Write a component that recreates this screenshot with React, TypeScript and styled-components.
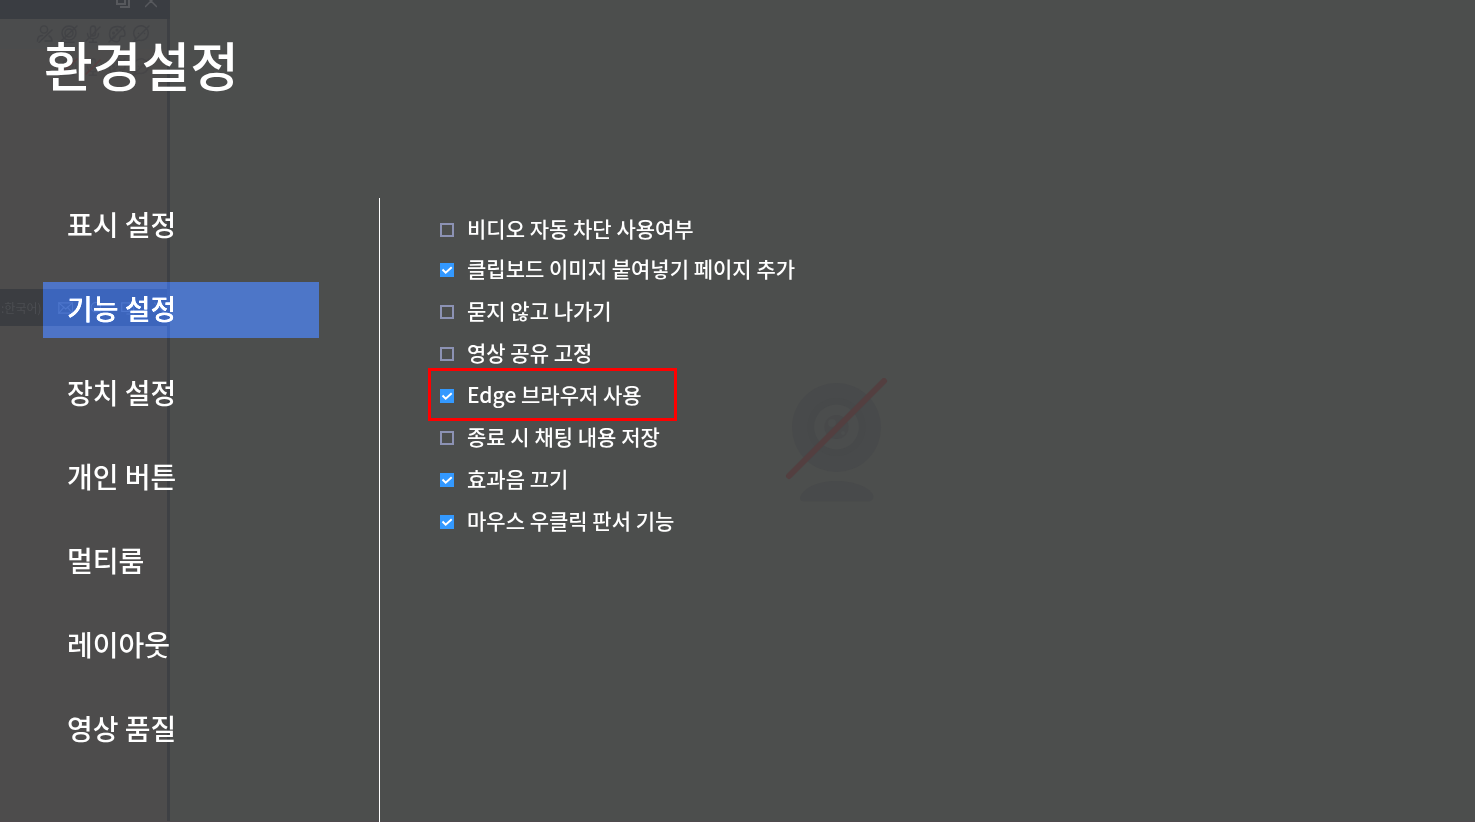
import React from "react";
import styled, { createGlobalStyle } from "styled-components";

const GlobalStyle = createGlobalStyle`
  * { box-sizing: border-box; }
  body {
    margin: 0;
    background: #4c4e4d;
    color: #fff;
    font-family: "Noto Sans CJK KR", "Noto Sans", sans-serif;
  }
`;

const Screen = styled.div`
  position: relative;
  min-height: 100vh;
  display: flex;
  flex-direction: column;
  overflow: hidden;
`;

/* The meeting window that shows dimly through the settings overlay */
const Behind = styled.div`
  position: absolute;
  inset: 0;
  display: flex;
  border-bottom: 1px solid #504a4d;
`;

const SidePanel = styled.div`
  width: 170px;
  display: flex;
  flex-direction: column;
  background: #4d4c4c;
  border-right: 3px solid #3e4044;
`;

const TitleBar = styled.div`
  height: 19px;
  margin-right: -3px;
  padding-right: 13px;
  display: flex;
  justify-content: flex-end;
  gap: 15px;
  background: #3a3d42;
  color: #57595d;
`;

const DeviceRow = styled.div<{ $first?: boolean }>`
  height: ${(p) => (p.$first ? 30 : 36)}px;
  padding-left: ${(p) => (p.$first ? 36 : 60)}px;
  display: flex;
  align-items: center;
  gap: 6px;
  background: ${(p) => (p.$first ? "#4b4c4d" : "transparent")};
  color: ${(p) => (p.$first ? "#424346" : "#474648")};
`;

const ChatBar = styled.div`
  height: 37px;
  margin-top: 204px;
  padding-left: 1px;
  display: flex;
  align-items: center;
  gap: 16px;
  background: #3b3d41;
  color: #4c4e52;
  font-size: 12px;
  white-space: nowrap;
`;

const Stage = styled.div`
  flex: 1;
  display: flex;
  justify-content: center;
  align-items: center;
`;

const CameraArt = styled.svg`
  display: block;
  margin: 60px 0 0 28px;
`;

const Header = styled.header`
  position: relative;
  padding: 26px 44px 0;
`;

const Title = styled.h1`
  margin: 0;
  font-size: 53px;
  line-height: 76px;
  font-weight: 500;
`;

const Body = styled.main`
  position: relative;
  flex: 1;
  display: flex;
  margin-top: 96px;
`;

const Menu = styled.nav`
  width: 380px;
  padding-left: 43px;
  display: flex;
  flex-direction: column;
  align-items: flex-start;
  gap: 28px;
  border-right: 1px solid #fff;
`;

/* The active bar only adds its blue, so the window behind stays visible */
const MenuItem = styled.button<{ $active?: boolean }>`
  width: 276px;
  height: 56px;
  padding: 0 24px 4px;
  border: 0;
  background: ${(p) => (p.$active ? "rgb(1, 40, 123)" : "transparent")};
  mix-blend-mode: ${(p) => (p.$active ? "plus-lighter" : "normal")};
  color: #fff;
  font-family: inherit;
  font-size: 28px;
  font-weight: 500;
  text-align: left;
  cursor: pointer;
`;

const Options = styled.form`
  padding: 12px 0 0 48px;
  display: flex;
  flex-direction: column;
  align-items: flex-start;
`;

const Option = styled.label<{ $short?: boolean }>`
  position: relative;
  height: ${(p) => (p.$short ? 38 : 42)}px;
  padding: 0 0 2px 12px;
  display: flex;
  align-items: center;
  gap: 13px;
  font-size: 21px;
  line-height: 32px;
  font-weight: 500;
  white-space: nowrap;
`;

const Highlight = styled.span`
  position: absolute;
  inset: -6px -35px -5px 0;
  border: 3px solid #f00;
  pointer-events: none;
`;

const Tick = styled.input`
  appearance: none;
  width: 14px;
  height: 14px;
  margin: 4px 0 0;
  border: 2px solid #8c92b4;
  &:checked {
    border: 0;
    background: #3399ff
      url("data:image/svg+xml,%3Csvg xmlns='http://www.w3.org/2000/svg' viewBox='0 0 14 14'%3E%3Cpath d='M2.5 6.5l3.2 3.2 6-5.4' fill='none' stroke='white' stroke-width='2'/%3E%3C/svg%3E");
  }
`;

const Svg = ({ children }: { children: React.ReactNode }) => (
  <svg width="18" height="18" viewBox="0 0 18 18" fill="none" stroke="currentColor" strokeWidth="1.4" strokeLinecap="round">
    {children}
  </svg>
);

const PersonOff = () => (
  <Svg>
    <circle cx="8" cy="4.5" r="3.6" />
    <path d="M9 16H16c0-3-1-4-3-5M1.5 16c0-4 2-5.5 5-5.5M16 5L3 17.5" />
  </Svg>
);
const CameraOff = ({ slash }: { slash?: string }) => (
  <Svg>
    <circle cx="9" cy="8" r="7" />
    <circle cx="9" cy="8" r="4" />
    <path d="M4 17.3h10" />
    <path d="M17 1L1 16" stroke={slash} />
  </Svg>
);
const MicOff = ({ slash }: { slash?: string }) => (
  <Svg>
    <rect x="6.5" y="1" width="5" height="10" rx="2.5" />
    <path d="M3.5 8.5c0 7 11 7 11 0M9 14v3M5.5 17.3h7" />
    <path d="M16 2L2 16" stroke={slash} />
  </Svg>
);
const PaletteOff = () => (
  <Svg>
    <path d="M10 16.5c-4 1-8.500-2-8.500-7.500S5 1.500 9.500 1.500 17 5 17 9s-4.500 1-5 3 .5 4-2 4.500zM17 1L1 17" />
    <circle cx="5.5" cy="8" r=".8" />
    <circle cx="9" cy="5" r=".8" />
    <circle cx="6" cy="12" r=".8" />
  </Svg>
);
const ChatOff = () => (
  <Svg>
    <path d="M2.5 16.5l1-3.5a7.300 7.300 0 1 1 3.500 2.200zM6.500 8.500h.1M9.500 8.500h.1M12.500 8.500h.1M17 1L1 17" />
  </Svg>
);
const Mail = () => (
  <Svg>
    <rect x="1" y="3" width="16" height="12" />
    <path d="M1 3l8 7 8-7M1 15l6-7M17 15l-6-7" />
  </Svg>
);
const Search = () => (
  <Svg>
    <circle cx="8" cy="8" r="5.5" />
    <path d="M12 12l3 3" />
  </Svg>
);
const Windows = () => (
  <Svg>
    <path d="M2 3h9v10H2zM14 7h2v9H8" />
  </Svg>
);
const Close = () => (
  <Svg>
    <path d="M3 3l11 11M14 3L3 14" />
  </Svg>
);

const menu = ["표시 설정", "기능 설정", "장치 설정", "개인 버튼", "멀티룸", "레이아웃", "영상 품질"];

const options = [
  { text: "비디오 자동 차단 사용여부", on: false },
  { text: "클립보드 이미지 붙여넣기 페이지 추가", on: true },
  { text: "묻지 않고 나가기", on: false },
  { text: "영상 공유 고정", on: false },
  { text: "Edge 브라우저 사용", on: true, marked: true },
  { text: "종료 시 채팅 내용 저장", on: false },
  { text: "효과음 끄기", on: true },
  { text: "마우스 우클릭 판서 기능", on: true },
];

export default function App() {
  const [active, setActive] = React.useState(1);
  return (
    <Screen>
      <GlobalStyle />
      <Behind aria-hidden="true">
        <SidePanel>
          <TitleBar>
            <svg width="14" height="9" viewBox="0 0 14 9" fill="none" stroke="currentColor" strokeWidth="2">
              <path d="M1 0v4h8V0M4 7h9V0" />
            </svg>
            <svg width="12" height="8" viewBox="0 0 12 8" fill="none" stroke="currentColor" strokeWidth="1.5">
              <path d="M0 7L6 1l6 6M3-2l3 3 3-3" />
            </svg>
          </TitleBar>
          <DeviceRow $first>
            <PersonOff />
            <CameraOff />
            <MicOff />
            <PaletteOff />
            <ChatOff />
          </DeviceRow>
          <DeviceRow>
            <CameraOff slash="#573f40" />
            <MicOff slash="#573f40" />
            <PaletteOff />
            <ChatOff />
          </DeviceRow>
          <ChatBar>
            :한국어)
            <Mail />
            <Search />
            <Windows />
            <Close />
          </ChatBar>
        </SidePanel>
        <Stage>
          <CameraArt width="104" height="126" viewBox="0 0 104 126">
            <circle cx="51.5" cy="49.5" r="44.5" fill="#484a4b" />
            <circle cx="51.5" cy="49" r="29" fill="#47494a" />
            <circle cx="51.5" cy="49" r="22.5" fill="#4b4d4d" />
            <circle cx="51.5" cy="49" r="12" fill="#48494a" />
            <circle cx="47" cy="45" r="4" fill="#4b4d4d" />
            <circle cx="58" cy="55" r="2" fill="#4b4d4d" />
            <path d="M15 120C17 110 33 103 51.5 103S86 110 88.5 118q0 5-5 5.500H20q-5 0-5-3.500z" fill="#484a4b" />
            <path d="M4 98L99 3" stroke="#533f40" strokeWidth="6" strokeLinecap="round" />
          </CameraArt>
        </Stage>
      </Behind>
      <Header>
        <Title>환경설정</Title>
      </Header>
      <Body>
        <Menu>
          {menu.map((m, i) => (
            <MenuItem key={m} type="button" $active={i === active} onClick={() => setActive(i)}>
              {m}
            </MenuItem>
          ))}
        </Menu>
        <Options>
          {options.map((o, i) => (
            <Option key={o.text} $short={i === 0}>
              <Tick type="checkbox" defaultChecked={o.on} />
              {o.text}
              {o.marked && <Highlight />}
            </Option>
          ))}
        </Options>
      </Body>
    </Screen>
  );
}
